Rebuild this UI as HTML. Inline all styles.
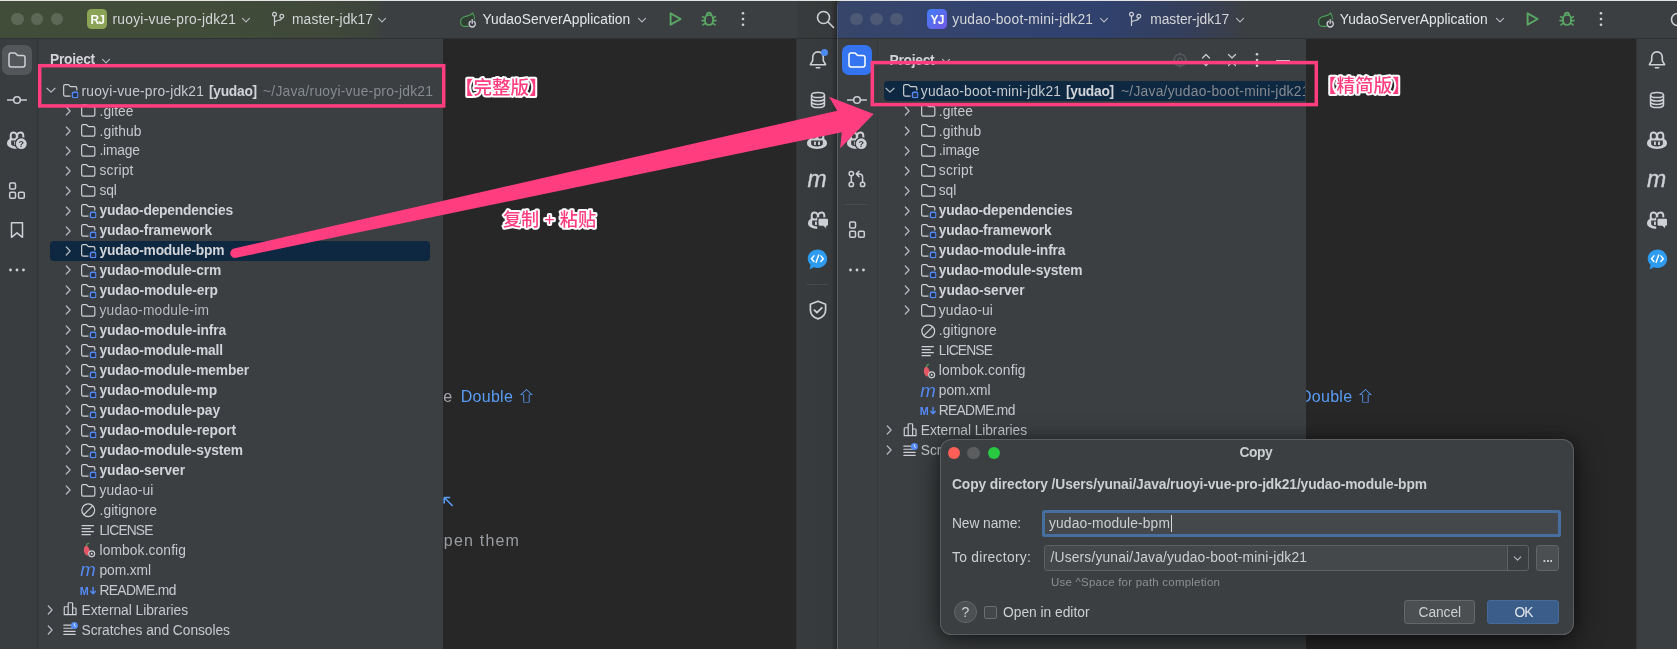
<!DOCTYPE html>
<html lang="zh"><head><meta charset="utf-8"><title>Copy module</title>
<style>
html,body{margin:0;padding:0;background:#272727;}
body{width:1677px;height:649px;position:relative;overflow:hidden;font-family:"Liberation Sans","Noto Sans CJK SC",sans-serif;}
.abs{position:absolute}
.t{position:absolute;white-space:pre;line-height:20px;height:20px}
.i{position:absolute;overflow:visible}
.win{position:absolute;top:0;height:649px;overflow:hidden}
.ann{position:absolute;white-space:pre;font-family:"Liberation Sans","Noto Sans CJK SC",sans-serif;font-weight:700;color:#ff3d7f;
 -webkit-text-stroke:3.2px #fff;paint-order:stroke fill;line-height:24px}
</style></head><body><div id="root" style="position:absolute;left:0;top:0;width:1677px;height:649px;will-change:transform">
<svg width="0" height="0" style="position:absolute">
<defs>
<symbol id="folder" viewBox="0 0 16 16"><path d="M1.6 4.2c0-.9.7-1.6 1.6-1.6h2.7c.4 0 .8.2 1 .5l.9 1.1c.2.2.4.3.7.3h4.3c.9 0 1.6.7 1.6 1.6v6c0 .9-.7 1.6-1.6 1.6H3.2c-.9 0-1.6-.7-1.6-1.6z" fill="none" stroke="#ced0d6" stroke-width="1.15"/></symbol>
<symbol id="module" viewBox="0 0 16 16"><path d="M8.2 13.7H3.2c-.9 0-1.6-.7-1.6-1.6V4.2c0-.9.7-1.6 1.6-1.6h2.7c.4 0 .8.2 1 .5l.9 1.1c.2.2.4.3.7.3h4.3c.9 0 1.6.7 1.6 1.6v2.2" fill="none" stroke="#ced0d6" stroke-width="1.15"/><rect x="10.1" y="9.9" width="5.3" height="5.3" rx="1.5" fill="#25324d" stroke="#548af7" stroke-width="1.3"/></symbol>
<symbol id="chr" viewBox="0 0 16 16"><path d="M6.300 4 10.100 8 6.300 12" fill="none" stroke="#b4b8bf" stroke-width="1.250" stroke-linecap="round" stroke-linejoin="round"/></symbol>
<symbol id="chd" viewBox="0 0 16 16"><path d="M4 6.300 8 10.100 12 6.300" fill="none" stroke="#b4b8bf" stroke-width="1.250" stroke-linecap="round" stroke-linejoin="round"/></symbol>
<symbol id="chds" viewBox="0 0 16 16"><path d="M4.5 6.3 8 9.8l3.5-3.5" fill="none" stroke="#b4b8bf" stroke-width="1.2" stroke-linecap="round" stroke-linejoin="round"/></symbol>
<symbol id="ignore" viewBox="0 0 16 16"><circle cx="8" cy="8" r="6.2" fill="none" stroke="#ced0d6" stroke-width="1.15"/><path d="M3.8 12.2 12.2 3.8" stroke="#ced0d6" stroke-width="1.15"/></symbol>
<symbol id="textf" viewBox="0 0 16 16"><path d="M2 3.600h11M2 6.500h8M2 9.400h11M2 12.300h8" stroke="#ced0d6" stroke-width="1.15" stroke-linecap="round"/></symbol>
<symbol id="lombok" viewBox="0 0 16 16"><path d="M6.2 3.2c-2 1-3 3.4-2.3 6 .5 2 1.8 3.5 3.4 4.2.3-1.300 1-2.500 2.300-3.200C9.600 7.500 8.500 4.800 6.200 3.200z" fill="#e55765"/><path d="M6.300 3.400c.2-1.200 1-1.900 2-2" fill="none" stroke="#57965c" stroke-width="1.3" stroke-linecap="round"/><circle cx="11.300" cy="11.500" r="2.900" fill="#3c3f41" stroke="#ced0d6" stroke-width="1.1"/><circle cx="11.300" cy="11.500" r="1" fill="#ced0d6"/></symbol>
<symbol id="mvn" viewBox="0 0 16 16"><text x="0.300" y="13.200" font-family="Liberation Sans,sans-serif" font-style="italic" font-size="18" fill="#548af7">m</text></symbol>
<symbol id="md" viewBox="0 0 16 16"><text x="-.3" y="12.200" font-family="Liberation Sans,sans-serif" font-weight="700" font-size="10.500" fill="#548af7">M</text><path d="M12.700 5.200v6M10.600 9.100l2.100 2.200 2.100-2.200" fill="none" stroke="#548af7" stroke-width="1.4" stroke-linecap="round" stroke-linejoin="round"/></symbol>
<symbol id="libs" viewBox="0 0 16 16"><path d="M2.200 13.300V6.300c0-.4.300-.7.700-.7H6v7.700zM6 13.300V2.400c0-.4.300-.7.700-.7h2.900c.4 0 .7.300.7.700v10.900zM10.300 13.300V6.800h2.600c.4 0 .7.300.7.700v5.800z" fill="none" stroke="#ced0d6" stroke-width="1.150" stroke-linejoin="round"/></symbol>
<symbol id="scratch" viewBox="0 0 16 16"><path d="M1.800 4h6.500M1.800 7h8.500M1.800 10h11M1.800 13h11" stroke="#ced0d6" stroke-width="1.15" stroke-linecap="round"/><circle cx="12" cy="4.300" r="3.400" fill="#548af7"/><path d="M12 2.600v1.900l1.200.8" fill="none" stroke="#dfe6ff" stroke-width=".9" stroke-linecap="round"/></symbol>
</defs></svg>
<div class="win" id="L" style="left:0;width:845px;background:#3c3f41"><div class="abs" style="left:443px;top:39px;width:354px;height:610px;background:#272727"></div><div class="abs" style="left:0;top:0;width:837px;height:38px;background:linear-gradient(90deg,#414c39 0,#414c39 200px,#3f483a 330px,#3d443c 372px,#3c3f41 384px)"></div><div class="abs" style="left:0;top:38px;width:837px;height:1px;background:#2f3133"></div><div class="abs" style="left:0;top:39px;width:37px;height:610px;background:#3a3d3f"></div><div class="abs" style="left:37px;top:39px;width:1.500px;height:610px;background:#35383a"></div><div class="abs" style="left:796px;top:39px;width:1px;height:610px;background:#333537"></div><div class="abs" style="left:797px;top:0;width:40px;height:649px;background:linear-gradient(90deg,rgba(0,0,0,.06) 0,rgba(0,0,0,.09) 85%,rgba(0,0,0,.34) 100%)"></div></div><div class="win" id="R" style="left:837px;width:840px;background:#3c3f41;border-top-left-radius:7px"><div class="abs" style="left:469px;top:39px;width:331px;height:610px;background:#272727"></div><div class="abs" style="left:0;top:0;width:840px;height:38px;background:linear-gradient(90deg,#364569 0,#32436f 160px,#30416d 270px,#353f5b 350px,#3a3f4a 395px,#3c3f41 410px)"></div><div class="abs" style="left:0;top:38px;width:840px;height:1px;background:#2f3133"></div><div class="abs" style="left:0;top:39px;width:1px;height:610px;background:#5c5f62"></div><div class="abs" style="left:0;top:0;width:1px;height:39px;background:#4a5778"></div><div class="abs" style="left:40px;top:39px;width:1px;height:610px;background:#37393c"></div><div class="abs" style="left:799px;top:39px;width:1px;height:610px;background:#333537"></div></div><div class="abs" style="left:0;top:0;width:1677px;height:1px;background:#e4e4e4"></div><div class="abs" style="left:50px;top:240.5px;width:380px;height:20px;border-radius:4px;background:#0d2840"></div><div class="abs" style="left:883.500px;top:80.700px;width:421.300px;height:19.900px;border-radius:4px 0 0 4px;background:#0d2840"></div><svg class="i" style="left:42.8px;top:82.05px;" width="16" height="16" viewBox="0 0 16 16"><use href="#chd"/></svg><svg class="i" style="left:62.3px;top:82.30px;" width="16.5" height="16.5" viewBox="0 0 16 16"><use href="#module"/></svg><span id="t0" class="t " style="left:81.5px;top:82px;font-size:13.8px;font-weight:400;color:#c6c9ce;letter-spacing:0.197px;">ruoyi-vue-pro-jdk21</span><svg class="i" style="left:60.0px;top:102.81px;" width="16" height="16" viewBox="0 0 16 16"><use href="#chr"/></svg><svg class="i" style="left:80.3px;top:102.26px;" width="16.5" height="16.5" viewBox="0 0 16 16"><use href="#folder"/></svg><span id="t1" class="t " style="left:99.5px;top:102px;font-size:13.8px;font-weight:400;color:#c6c9ce;letter-spacing:0.043px;">.gitee</span><svg class="i" style="left:60.0px;top:122.77px;" width="16" height="16" viewBox="0 0 16 16"><use href="#chr"/></svg><svg class="i" style="left:80.3px;top:122.22px;" width="16.5" height="16.5" viewBox="0 0 16 16"><use href="#folder"/></svg><span id="t2" class="t " style="left:99.5px;top:122px;font-size:13.8px;font-weight:400;color:#c6c9ce;letter-spacing:0.087px;">.github</span><svg class="i" style="left:60.0px;top:142.73px;" width="16" height="16" viewBox="0 0 16 16"><use href="#chr"/></svg><svg class="i" style="left:80.3px;top:142.18px;" width="16.5" height="16.5" viewBox="0 0 16 16"><use href="#folder"/></svg><span id="t3" class="t " style="left:99.5px;top:141px;font-size:13.8px;font-weight:400;color:#c6c9ce;letter-spacing:-0.222px;">.image</span><svg class="i" style="left:60.0px;top:162.69px;" width="16" height="16" viewBox="0 0 16 16"><use href="#chr"/></svg><svg class="i" style="left:80.3px;top:162.14px;" width="16.5" height="16.5" viewBox="0 0 16 16"><use href="#folder"/></svg><span id="t4" class="t " style="left:99.5px;top:161px;font-size:13.8px;font-weight:400;color:#c6c9ce;letter-spacing:0.188px;">script</span><svg class="i" style="left:60.0px;top:182.65px;" width="16" height="16" viewBox="0 0 16 16"><use href="#chr"/></svg><svg class="i" style="left:80.3px;top:182.10px;" width="16.5" height="16.5" viewBox="0 0 16 16"><use href="#folder"/></svg><span id="t5" class="t " style="left:99.5px;top:181px;font-size:13.8px;font-weight:400;color:#c6c9ce;letter-spacing:-0.176px;">sql</span><svg class="i" style="left:60.0px;top:202.61px;" width="16" height="16" viewBox="0 0 16 16"><use href="#chr"/></svg><svg class="i" style="left:80.3px;top:202.06px;" width="16.5" height="16.5" viewBox="0 0 16 16"><use href="#module"/></svg><span id="t6" class="t " style="left:99.5px;top:201px;font-size:13.8px;font-weight:700;color:#d2d4d9;letter-spacing:-0.214px;">yudao-dependencies</span><svg class="i" style="left:60.0px;top:222.57px;" width="16" height="16" viewBox="0 0 16 16"><use href="#chr"/></svg><svg class="i" style="left:80.3px;top:222.02px;" width="16.5" height="16.5" viewBox="0 0 16 16"><use href="#module"/></svg><span id="t7" class="t " style="left:99.5px;top:221px;font-size:13.8px;font-weight:700;color:#d2d4d9;letter-spacing:-0.167px;">yudao-framework</span><svg class="i" style="left:60.0px;top:242.53px;" width="16" height="16" viewBox="0 0 16 16"><use href="#chr"/></svg><svg class="i" style="left:80.3px;top:241.98px;" width="16.5" height="16.5" viewBox="0 0 16 16"><use href="#module"/></svg><span id="t8" class="t " style="left:99.5px;top:241px;font-size:13.8px;font-weight:700;color:#d2d4d9;letter-spacing:-0.194px;">yudao-module-bpm</span><svg class="i" style="left:60.0px;top:262.49px;" width="16" height="16" viewBox="0 0 16 16"><use href="#chr"/></svg><svg class="i" style="left:80.3px;top:261.94px;" width="16.5" height="16.5" viewBox="0 0 16 16"><use href="#module"/></svg><span id="t9" class="t " style="left:99.5px;top:261px;font-size:13.8px;font-weight:700;color:#d2d4d9;letter-spacing:-0.167px;">yudao-module-crm</span><svg class="i" style="left:60.0px;top:282.45px;" width="16" height="16" viewBox="0 0 16 16"><use href="#chr"/></svg><svg class="i" style="left:80.3px;top:281.90px;" width="16.5" height="16.5" viewBox="0 0 16 16"><use href="#module"/></svg><span id="t10" class="t " style="left:99.5px;top:281px;font-size:13.8px;font-weight:700;color:#d2d4d9;letter-spacing:-0.133px;">yudao-module-erp</span><svg class="i" style="left:60.0px;top:302.41px;" width="16" height="16" viewBox="0 0 16 16"><use href="#chr"/></svg><svg class="i" style="left:80.3px;top:301.86px;" width="16.5" height="16.5" viewBox="0 0 16 16"><use href="#folder"/></svg><span id="t11" class="t " style="left:99.5px;top:301px;font-size:13.8px;font-weight:400;color:#b7bac0;letter-spacing:0.200px;">yudao-module-im</span><svg class="i" style="left:60.0px;top:322.37px;" width="16" height="16" viewBox="0 0 16 16"><use href="#chr"/></svg><svg class="i" style="left:80.3px;top:321.82px;" width="16.5" height="16.5" viewBox="0 0 16 16"><use href="#module"/></svg><span id="t12" class="t " style="left:99.5px;top:321px;font-size:13.8px;font-weight:700;color:#d2d4d9;letter-spacing:-0.130px;">yudao-module-infra</span><svg class="i" style="left:60.0px;top:342.33px;" width="16" height="16" viewBox="0 0 16 16"><use href="#chr"/></svg><svg class="i" style="left:80.3px;top:341.78px;" width="16.5" height="16.5" viewBox="0 0 16 16"><use href="#module"/></svg><span id="t13" class="t " style="left:99.5px;top:341px;font-size:13.8px;font-weight:700;color:#d2d4d9;letter-spacing:-0.181px;">yudao-module-mall</span><svg class="i" style="left:60.0px;top:362.29px;" width="16" height="16" viewBox="0 0 16 16"><use href="#chr"/></svg><svg class="i" style="left:80.3px;top:361.74px;" width="16.5" height="16.5" viewBox="0 0 16 16"><use href="#module"/></svg><span id="t14" class="t " style="left:99.5px;top:361px;font-size:13.8px;font-weight:700;color:#d2d4d9;letter-spacing:-0.166px;">yudao-module-member</span><svg class="i" style="left:60.0px;top:382.25px;" width="16" height="16" viewBox="0 0 16 16"><use href="#chr"/></svg><svg class="i" style="left:80.3px;top:381.70px;" width="16.5" height="16.5" viewBox="0 0 16 16"><use href="#module"/></svg><span id="t15" class="t " style="left:99.5px;top:381px;font-size:13.8px;font-weight:700;color:#d2d4d9;letter-spacing:-0.143px;">yudao-module-mp</span><svg class="i" style="left:60.0px;top:402.21px;" width="16" height="16" viewBox="0 0 16 16"><use href="#chr"/></svg><svg class="i" style="left:80.3px;top:401.66px;" width="16.5" height="16.5" viewBox="0 0 16 16"><use href="#module"/></svg><span id="t16" class="t " style="left:99.5px;top:401px;font-size:13.8px;font-weight:700;color:#d2d4d9;letter-spacing:-0.139px;">yudao-module-pay</span><svg class="i" style="left:60.0px;top:422.17px;" width="16" height="16" viewBox="0 0 16 16"><use href="#chr"/></svg><svg class="i" style="left:80.3px;top:421.62px;" width="16.5" height="16.5" viewBox="0 0 16 16"><use href="#module"/></svg><span id="t17" class="t " style="left:99.5px;top:421px;font-size:13.8px;font-weight:700;color:#d2d4d9;letter-spacing:-0.122px;">yudao-module-report</span><svg class="i" style="left:60.0px;top:442.13px;" width="16" height="16" viewBox="0 0 16 16"><use href="#chr"/></svg><svg class="i" style="left:80.3px;top:441.58px;" width="16.5" height="16.5" viewBox="0 0 16 16"><use href="#module"/></svg><span id="t18" class="t " style="left:99.5px;top:441px;font-size:13.8px;font-weight:700;color:#d2d4d9;letter-spacing:-0.159px;">yudao-module-system</span><svg class="i" style="left:60.0px;top:462.09px;" width="16" height="16" viewBox="0 0 16 16"><use href="#chr"/></svg><svg class="i" style="left:80.3px;top:461.54px;" width="16.5" height="16.5" viewBox="0 0 16 16"><use href="#module"/></svg><span id="t19" class="t " style="left:99.5px;top:461px;font-size:13.8px;font-weight:700;color:#d2d4d9;letter-spacing:-0.101px;">yudao-server</span><svg class="i" style="left:60.0px;top:482.05px;" width="16" height="16" viewBox="0 0 16 16"><use href="#chr"/></svg><svg class="i" style="left:80.3px;top:481.50px;" width="16.5" height="16.5" viewBox="0 0 16 16"><use href="#folder"/></svg><span id="t20" class="t " style="left:99.5px;top:481px;font-size:13.8px;font-weight:400;color:#c6c9ce;letter-spacing:0.128px;">yudao-ui</span><svg class="i" style="left:80.3px;top:502.26px;" width="16.5" height="16.5" viewBox="0 0 16 16"><use href="#ignore"/></svg><span id="t21" class="t " style="left:99.5px;top:501px;font-size:13.8px;font-weight:400;color:#c6c9ce;letter-spacing:0.077px;">.gitignore</span><svg class="i" style="left:80.3px;top:522.22px;" width="16.5" height="16.5" viewBox="0 0 16 16"><use href="#textf"/></svg><span id="t22" class="t " style="left:99.5px;top:521px;font-size:13.8px;font-weight:400;color:#c6c9ce;letter-spacing:-0.853px;">LICENSE</span><svg class="i" style="left:80.3px;top:542.18px;" width="16.5" height="16.5" viewBox="0 0 16 16"><use href="#lombok"/></svg><span id="t23" class="t " style="left:99.5px;top:541px;font-size:13.8px;font-weight:400;color:#c6c9ce;letter-spacing:0.109px;">lombok.config</span><svg class="i" style="left:80.3px;top:562.14px;" width="16.5" height="16.5" viewBox="0 0 16 16"><use href="#mvn"/></svg><span id="t24" class="t " style="left:99.5px;top:561px;font-size:13.8px;font-weight:400;color:#c6c9ce;letter-spacing:-0.099px;">pom.xml</span><svg class="i" style="left:80.3px;top:582.10px;" width="16.5" height="16.5" viewBox="0 0 16 16"><use href="#md"/></svg><span id="t25" class="t " style="left:99.5px;top:581px;font-size:13.8px;font-weight:400;color:#c6c9ce;letter-spacing:-0.651px;">README.md</span><svg class="i" style="left:42.0px;top:601.81px;" width="16" height="16" viewBox="0 0 16 16"><use href="#chr"/></svg><svg class="i" style="left:62.3px;top:601.26px;" width="16.5" height="16.5" viewBox="0 0 16 16"><use href="#libs"/></svg><span id="t26" class="t " style="left:81.5px;top:601px;font-size:13.8px;font-weight:400;color:#c6c9ce;letter-spacing:-0.049px;">External Libraries</span><svg class="i" style="left:42.0px;top:621.77px;" width="16" height="16" viewBox="0 0 16 16"><use href="#chr"/></svg><svg class="i" style="left:62.3px;top:621.22px;" width="16.5" height="16.5" viewBox="0 0 16 16"><use href="#scratch"/></svg><span id="t27" class="t " style="left:81.5px;top:621px;font-size:13.8px;font-weight:400;color:#c6c9ce;letter-spacing:-0.049px;">Scratches and Consoles</span><span id="t28" class="t " style="left:209px;top:82px;font-size:13.8px;font-weight:700;color:#d2d4d9;letter-spacing:-0.281px;">[yudao]</span><span id="t29" class="t " style="left:263px;top:82px;font-size:13.8px;font-weight:400;color:#868a91;letter-spacing:0.246px;">~/Java/ruoyi-vue-pro-jdk21</span><span id="t30" class="t " style="left:50px;top:50px;font-size:13.8px;font-weight:700;color:#d2d4d9;letter-spacing:-0.274px;">Project</span><svg class="i" style="left:98px;top:52.50px;" width="16" height="16" viewBox="0 0 16 16"><use href="#chds"/></svg><svg class="i" style="left:882.0999999999999px;top:82.05px;" width="16" height="16" viewBox="0 0 16 16"><use href="#chd"/></svg><svg class="i" style="left:901.5999999999999px;top:82.30px;" width="16.5" height="16.5" viewBox="0 0 16 16"><use href="#module"/></svg><span id="t31" class="t " style="left:920.8px;top:82px;font-size:13.8px;font-weight:400;color:#c6c9ce;letter-spacing:0.180px;">yudao-boot-mini-jdk21</span><svg class="i" style="left:899.3px;top:102.81px;" width="16" height="16" viewBox="0 0 16 16"><use href="#chr"/></svg><svg class="i" style="left:919.5999999999999px;top:102.26px;" width="16.5" height="16.5" viewBox="0 0 16 16"><use href="#folder"/></svg><span id="t32" class="t " style="left:938.8px;top:102px;font-size:13.8px;font-weight:400;color:#c6c9ce;letter-spacing:0.061px;">.gitee</span><svg class="i" style="left:899.3px;top:122.77px;" width="16" height="16" viewBox="0 0 16 16"><use href="#chr"/></svg><svg class="i" style="left:919.5999999999999px;top:122.22px;" width="16.5" height="16.5" viewBox="0 0 16 16"><use href="#folder"/></svg><span id="t33" class="t " style="left:938.8px;top:122px;font-size:13.8px;font-weight:400;color:#c6c9ce;letter-spacing:0.148px;">.github</span><svg class="i" style="left:899.3px;top:142.73px;" width="16" height="16" viewBox="0 0 16 16"><use href="#chr"/></svg><svg class="i" style="left:919.5999999999999px;top:142.18px;" width="16.5" height="16.5" viewBox="0 0 16 16"><use href="#folder"/></svg><span id="t34" class="t " style="left:938.8px;top:141px;font-size:13.8px;font-weight:400;color:#c6c9ce;letter-spacing:-0.131px;">.image</span><svg class="i" style="left:899.3px;top:162.69px;" width="16" height="16" viewBox="0 0 16 16"><use href="#chr"/></svg><svg class="i" style="left:919.5999999999999px;top:162.14px;" width="16.5" height="16.5" viewBox="0 0 16 16"><use href="#folder"/></svg><span id="t35" class="t " style="left:938.8px;top:161px;font-size:13.8px;font-weight:400;color:#c6c9ce;letter-spacing:0.206px;">script</span><svg class="i" style="left:899.3px;top:182.65px;" width="16" height="16" viewBox="0 0 16 16"><use href="#chr"/></svg><svg class="i" style="left:919.5999999999999px;top:182.10px;" width="16.5" height="16.5" viewBox="0 0 16 16"><use href="#folder"/></svg><span id="t36" class="t " style="left:938.8px;top:181px;font-size:13.8px;font-weight:400;color:#c6c9ce;letter-spacing:-0.096px;">sql</span><svg class="i" style="left:899.3px;top:202.61px;" width="16" height="16" viewBox="0 0 16 16"><use href="#chr"/></svg><svg class="i" style="left:919.5999999999999px;top:202.06px;" width="16.5" height="16.5" viewBox="0 0 16 16"><use href="#module"/></svg><span id="t37" class="t " style="left:938.8px;top:201px;font-size:13.8px;font-weight:700;color:#d2d4d9;letter-spacing:-0.203px;">yudao-dependencies</span><svg class="i" style="left:899.3px;top:222.57px;" width="16" height="16" viewBox="0 0 16 16"><use href="#chr"/></svg><svg class="i" style="left:919.5999999999999px;top:222.02px;" width="16.5" height="16.5" viewBox="0 0 16 16"><use href="#module"/></svg><span id="t38" class="t " style="left:938.8px;top:221px;font-size:13.8px;font-weight:700;color:#d2d4d9;letter-spacing:-0.153px;">yudao-framework</span><svg class="i" style="left:899.3px;top:242.53px;" width="16" height="16" viewBox="0 0 16 16"><use href="#chr"/></svg><svg class="i" style="left:919.5999999999999px;top:241.98px;" width="16.5" height="16.5" viewBox="0 0 16 16"><use href="#module"/></svg><span id="t39" class="t " style="left:938.8px;top:241px;font-size:13.8px;font-weight:700;color:#d2d4d9;letter-spacing:-0.119px;">yudao-module-infra</span><svg class="i" style="left:899.3px;top:262.49px;" width="16" height="16" viewBox="0 0 16 16"><use href="#chr"/></svg><svg class="i" style="left:919.5999999999999px;top:261.94px;" width="16.5" height="16.5" viewBox="0 0 16 16"><use href="#module"/></svg><span id="t40" class="t " style="left:938.8px;top:261px;font-size:13.8px;font-weight:700;color:#d2d4d9;letter-spacing:-0.148px;">yudao-module-system</span><svg class="i" style="left:899.3px;top:282.45px;" width="16" height="16" viewBox="0 0 16 16"><use href="#chr"/></svg><svg class="i" style="left:919.5999999999999px;top:281.90px;" width="16.5" height="16.5" viewBox="0 0 16 16"><use href="#module"/></svg><span id="t41" class="t " style="left:938.8px;top:281px;font-size:13.8px;font-weight:700;color:#d2d4d9;letter-spacing:-0.083px;">yudao-server</span><svg class="i" style="left:899.3px;top:302.41px;" width="16" height="16" viewBox="0 0 16 16"><use href="#chr"/></svg><svg class="i" style="left:919.5999999999999px;top:301.86px;" width="16.5" height="16.5" viewBox="0 0 16 16"><use href="#folder"/></svg><span id="t42" class="t " style="left:938.8px;top:301px;font-size:13.8px;font-weight:400;color:#c6c9ce;letter-spacing:0.168px;">yudao-ui</span><svg class="i" style="left:919.5999999999999px;top:322.62px;" width="16.5" height="16.5" viewBox="0 0 16 16"><use href="#ignore"/></svg><span id="t43" class="t " style="left:938.8px;top:321px;font-size:13.8px;font-weight:400;color:#c6c9ce;letter-spacing:0.119px;">.gitignore</span><svg class="i" style="left:919.5999999999999px;top:342.58px;" width="16.5" height="16.5" viewBox="0 0 16 16"><use href="#textf"/></svg><span id="t44" class="t " style="left:938.8px;top:341px;font-size:13.8px;font-weight:400;color:#c6c9ce;letter-spacing:-0.823px;">LICENSE</span><svg class="i" style="left:919.5999999999999px;top:362.54px;" width="16.5" height="16.5" viewBox="0 0 16 16"><use href="#lombok"/></svg><span id="t45" class="t " style="left:938.8px;top:361px;font-size:13.8px;font-weight:400;color:#c6c9ce;letter-spacing:0.133px;">lombok.config</span><svg class="i" style="left:919.5999999999999px;top:382.50px;" width="16.5" height="16.5" viewBox="0 0 16 16"><use href="#mvn"/></svg><span id="t46" class="t " style="left:938.8px;top:381px;font-size:13.8px;font-weight:400;color:#c6c9ce;letter-spacing:-0.052px;">pom.xml</span><svg class="i" style="left:919.5999999999999px;top:402.46px;" width="16.5" height="16.5" viewBox="0 0 16 16"><use href="#md"/></svg><span id="t47" class="t " style="left:938.8px;top:401px;font-size:13.8px;font-weight:400;color:#c6c9ce;letter-spacing:-0.686px;">README.md</span><svg class="i" style="left:881.3px;top:422.17px;" width="16" height="16" viewBox="0 0 16 16"><use href="#chr"/></svg><svg class="i" style="left:901.5999999999999px;top:421.62px;" width="16.5" height="16.5" viewBox="0 0 16 16"><use href="#libs"/></svg><span id="t48" class="t " style="left:920.8px;top:421px;font-size:13.8px;font-weight:400;color:#c6c9ce;letter-spacing:-0.066px;">External Libraries</span><svg class="i" style="left:881.3px;top:442.13px;" width="16" height="16" viewBox="0 0 16 16"><use href="#chr"/></svg><svg class="i" style="left:901.5999999999999px;top:441.58px;" width="16.5" height="16.5" viewBox="0 0 16 16"><use href="#scratch"/></svg><span id="t49" class="t " style="left:920.8px;top:441px;font-size:13.8px;font-weight:400;color:#c6c9ce;letter-spacing:-0.063px;">Scratches and Consoles</span><span id="t50" class="t " style="left:1066px;top:82px;font-size:13.8px;font-weight:700;color:#d2d4d9;letter-spacing:-0.281px;">[yudao]</span><div class="abs" style="left:1121px;top:80px;width:183.800px;height:21px;overflow:hidden"><span id="t51" class="t " style="left:0px;top:2px;font-size:13.8px;font-weight:400;color:#868a91;letter-spacing:0.259px;">~/Java/yudao-boot-mini-jdk21</span></div><span id="t52" class="t " style="left:889.5px;top:51px;font-size:13.8px;font-weight:700;color:#d2d4d9;letter-spacing:-0.274px;">Project</span><svg class="i" style="left:937.5px;top:53.00px;" width="16" height="16" viewBox="0 0 16 16"><use href="#chds"/></svg><div class="abs" style="left:443px;top:380px;width:354px;height:200px;overflow:hidden"><span id="t53" class="t " style="left:0.3px;top:7px;font-size:16px;font-weight:400;color:#a4a7ac;letter-spacing:0.000px;">e</span><span id="t54" class="t " style="left:17.7px;top:7px;font-size:16px;font-weight:400;color:#589df6;letter-spacing:0.290px;">Double</span><span id="t55" class="t " style="left:73.8px;top:7px;font-size:13.5px;font-weight:700;color:#589df6;letter-spacing:0.000px;transform:scaleX(1.4);transform-origin:0 50%;">⇧</span><span id="t56" class="t " style="left:-9.3px;top:151px;font-size:16px;font-weight:400;color:#9a9da2;letter-spacing:1.199px;">open them</span><svg class="abs" style="left:0;top:116px" width="12" height="12" viewBox="0 0 12 12"><path d="M1.200 1.500h6M1.200 1.500v6M1.200 1.500l8.500 8.500" fill="none" stroke="#589df6" stroke-width="1.6"/></svg></div><div class="abs" style="left:1306px;top:380px;width:331px;height:40px;overflow:hidden"><span id="t57" class="t " style="left:-6px;top:7px;font-size:16px;font-weight:400;color:#589df6;letter-spacing:0.272px;">Double</span><span id="t58" class="t " style="left:50.3px;top:7px;font-size:13.5px;font-weight:700;color:#589df6;letter-spacing:0.000px;transform:scaleX(1.4);transform-origin:0 50%;">⇧</span></div><svg width="0" height="0" style="position:absolute"><defs>
<symbol id="s-folder" viewBox="0 0 20 20"><path d="M2 5.200C2 4 3 3 4.200 3h3.300c.6 0 1.100.2 1.500.7l1.100 1.300c.2.300.5.400.9.400h4.800C17 5.400 18 6.400 18 7.600v7.200c0 1.200-1 2.200-2.200 2.200H4.200C3 17 2 16 2 14.800z" fill="none" stroke="currentColor" stroke-width="1.500"/></symbol>
<symbol id="s-commit" viewBox="0 0 20 20"><path d="M0.500 10H6.500M13.500 10H19.500" stroke="currentColor" stroke-width="1.500" stroke-linecap="round"/><circle cx="10" cy="10" r="3.300" fill="none" stroke="currentColor" stroke-width="1.500"/></symbol>
<symbol id="s-struct" viewBox="0 0 20 20"><rect x="2.700" y="2" width="5.800" height="6" rx="1.300" fill="none" stroke="currentColor" stroke-width="1.500"/><rect x="2.700" y="11.200" width="5.800" height="6" rx="1.300" fill="none" stroke="currentColor" stroke-width="1.500"/><rect x="11.500" y="11.200" width="5.800" height="6" rx="1.300" fill="none" stroke="currentColor" stroke-width="1.500"/></symbol>
<symbol id="s-bookmark" viewBox="0 0 20 20"><path d="M4.500 2.800h11v14.500L10 12.800l-5.500 4.500z" fill="none" stroke="currentColor" stroke-width="1.500" stroke-linejoin="round"/></symbol>
<symbol id="s-more" viewBox="0 0 20 20"><circle cx="3.500" cy="10" r="1.400" fill="currentColor"/><circle cx="10" cy="10" r="1.400" fill="currentColor"/><circle cx="16.500" cy="10" r="1.400" fill="currentColor"/></symbol>
<symbol id="s-bell" viewBox="0 0 20 20"><path d="M10 1.900C6.700 1.900 4.700 4.300 4.700 7.400v3.300L2.400 14.700h15.200L15.300 10.700V7.400C15.300 4.300 13.300 1.900 10 1.900z" fill="none" stroke="currentColor" stroke-width="1.600" stroke-linejoin="round"/><path d="M8.300 17.800h3.400" stroke="currentColor" stroke-width="1.600" stroke-linecap="round"/></symbol>
<symbol id="s-db" viewBox="0 0 20 20"><ellipse cx="10" cy="5" rx="6.500" ry="2.600" fill="none" stroke="currentColor" stroke-width="1.500"/><path d="M3.500 5v10c0 1.400 2.900 2.600 6.500 2.600s6.500-1.200 6.500-2.600V5M3.500 8.400c0 1.400 2.900 2.600 6.500 2.600s6.500-1.200 6.500-2.600M3.500 11.800c0 1.400 2.900 2.600 6.500 2.600s6.500-1.200 6.500-2.600" fill="none" stroke="currentColor" stroke-width="1.500"/></symbol>
<symbol id="s-copilot" viewBox="0 0 20 20"><path fill-rule="evenodd" fill="currentColor" d="M10 18.900C4.200 18.900 0 16.600 0 13.500 0 11.600 1 10.100 2.700 9.100V5.400C2.700 3 4.200 1.500 6.400 1.500 8 1.500 9.300 2.200 10 3.400 10.700 2.200 12 1.500 13.600 1.500 15.800 1.500 17.300 3 17.300 5.400V9.100C19 10.100 20 11.600 20 13.500 20 16.600 15.800 18.900 10 18.900ZM4.700 5.400C4.700 4.100 5.300 3.400 6.400 3.400 7.800 3.400 8.800 4.100 8.800 5.500V7C8.800 7.800 8.200 8.400 7.400 8.400H6.100C5.300 8.400 4.700 7.800 4.700 7ZM15.300 5.400C15.300 4.100 14.700 3.400 13.600 3.400 12.200 3.400 11.200 4.100 11.200 5.500V7C11.200 7.800 11.800 8.400 12.600 8.400H13.900C14.700 8.400 15.300 7.800 15.300 7ZM4.200 10.600H15.800V14.300C15.800 15.300 13.400 16.400 10 16.400 6.600 16.400 4.200 15.300 4.200 14.300Z"/><rect x="7" y="11.600" width="1.900" height="3.500" rx=".5" fill="currentColor"/><rect x="11.100" y="11.600" width="1.900" height="3.500" rx=".5" fill="currentColor"/></symbol>
<symbol id="s-copq" viewBox="0 0 20 20"><path fill-rule="evenodd" fill="currentColor" d="M10 18.900C4.200 18.900 0 16.600 0 13.500 0 11.600 1 10.100 2.700 9.100V5.400C2.700 3 4.200 1.500 6.400 1.500 8 1.500 9.300 2.200 10 3.400 10.700 2.200 12 1.500 13.600 1.500 15.800 1.500 17.300 3 17.300 5.400V9.100C19 10.100 20 11.600 20 13.500 20 16.600 15.800 18.900 10 18.900ZM4.700 5.400C4.700 4.100 5.300 3.400 6.400 3.400 7.800 3.400 8.800 4.100 8.800 5.500V7C8.800 7.800 8.200 8.400 7.400 8.400H6.100C5.300 8.400 4.700 7.800 4.700 7ZM15.300 5.400C15.300 4.100 14.700 3.400 13.600 3.400 12.200 3.400 11.200 4.100 11.200 5.500V7C11.200 7.800 11.800 8.400 12.600 8.400H13.900C14.700 8.400 15.300 7.800 15.300 7ZM4.200 10.600H15.800V14.300C15.800 15.300 13.400 16.400 10 16.400 6.600 16.400 4.200 15.300 4.200 14.300Z"/><rect x="7" y="11.600" width="1.900" height="3.500" rx=".5" fill="currentColor"/><rect x="11.100" y="11.600" width="1.900" height="3.500" rx=".5" fill="currentColor"/><circle cx="14.300" cy="13.700" r="6.700" fill="#3b3e40"/><circle cx="14.300" cy="13.700" r="5.400" fill="currentColor"/><text x="14.300" y="16.900" text-anchor="middle" font-family="Liberation Sans,sans-serif" font-weight="700" font-size="9" fill="#3b3e40">?</text></symbol>
<symbol id="s-copchat" viewBox="0 0 20 20"><path fill-rule="evenodd" fill="currentColor" d="M10 18.900C4.200 18.900 0 16.600 0 13.500 0 11.600 1 10.100 2.700 9.100V5.400C2.700 3 4.200 1.500 6.400 1.500 8 1.500 9.300 2.200 10 3.400 10.700 2.200 12 1.500 13.600 1.500 15.800 1.500 17.300 3 17.300 5.400V9.100C19 10.100 20 11.600 20 13.500 20 16.600 15.800 18.900 10 18.900ZM4.700 5.400C4.700 4.100 5.300 3.400 6.400 3.400 7.800 3.400 8.800 4.100 8.800 5.500V7C8.800 7.800 8.200 8.400 7.400 8.400H6.100C5.300 8.400 4.700 7.800 4.700 7ZM15.300 5.400C15.300 4.100 14.700 3.400 13.600 3.400 12.200 3.400 11.200 4.100 11.200 5.500V7C11.200 7.800 11.800 8.400 12.600 8.400H13.900C14.700 8.400 15.300 7.800 15.300 7ZM4.200 10.600H15.800V14.300C15.800 15.300 13.400 16.400 10 16.400 6.600 16.400 4.200 15.300 4.200 14.300Z"/><rect x="7" y="11.600" width="1.900" height="3.500" rx=".5" fill="currentColor"/><rect x="11.100" y="11.600" width="1.900" height="3.500" rx=".5" fill="currentColor"/><path d="M9.200 7.300H21V19.500H9.200Z" fill="#3b3e40"/><path d="M11.700 8.700h7.200c.7 0 1.200.5 1.200 1.200v4.600c0 .7-.5 1.200-1.200 1.200h-.8v2.600l-2.700-2.600h-3.700c-.7 0-1.200-.5-1.200-1.200V9.900c0-.7.500-1.200 1.200-1.200z" fill="currentColor"/></symbol>
<symbol id="s-pr" viewBox="0 0 20 20"><circle cx="4.300" cy="4.600" r="2.200" fill="none" stroke="currentColor" stroke-width="1.500"/><circle cx="4.300" cy="15.400" r="2.200" fill="none" stroke="currentColor" stroke-width="1.500"/><circle cx="15.600" cy="15.400" r="2.200" fill="none" stroke="currentColor" stroke-width="1.500"/><path d="M4.300 6.800v6.400M15.600 13.200V8.300c0-1.900-1.400-3.400-3.300-3.400H9.700M12 2.200 9.300 4.900 12 7.600" fill="none" stroke="currentColor" stroke-width="1.500" stroke-linecap="round" stroke-linejoin="round"/></symbol>
<symbol id="s-shield" viewBox="0 0 20 20"><path d="M10 1.300 17.600 4.300v5.600c0 4.200-2.900 7.300-7.600 9C5.300 17.200 2.400 14.100 2.400 9.900V4.300z" fill="none" stroke="currentColor" stroke-width="1.700" stroke-linejoin="round"/><path d="M6.400 10.100 9 12.700 13.800 7.800" fill="none" stroke="currentColor" stroke-width="1.800" stroke-linecap="round" stroke-linejoin="round"/></symbol>
<symbol id="s-bubble" viewBox="0 0 20 20"><path d="M10 .6a9.400 8.800 0 1 1-3.400 17l-4 2 .8-4.300A8.800 8.800 0 0 1 .6 9.400 9.400 8.800 0 0 1 10 .6z" fill="#2d9bf0"/><path d="M6.700 6.600 4.300 9.300l2.400 2.700M13.300 6.600l2.400 2.700-2.400 2.700M11.200 5.800 8.800 12.800" fill="none" stroke="#fff" stroke-width="1.400" stroke-linecap="round" stroke-linejoin="round"/></symbol>
<symbol id="t-branch" viewBox="0 0 16 16"><circle cx="4.500" cy="3.300" r="1.900" fill="none" stroke="currentColor" stroke-width="1.200"/><circle cx="11.800" cy="5.300" r="1.900" fill="none" stroke="currentColor" stroke-width="1.200"/><path d="M4.500 5.200v9.300M4.500 11.500c0-2.800 7.300-1.200 7.300-4.300" fill="none" stroke="currentColor" stroke-width="1.200" stroke-linecap="round"/></symbol>
<symbol id="t-run" viewBox="0 0 16 16"><path d="M2.600 2.300v11.400L12.600 8z" fill="none" stroke="#5aa865" stroke-width="1.900" stroke-linejoin="round"/></symbol>
<symbol id="t-bug" viewBox="0 0 16 16"><path d="M4.100 7.200c0-2 1.600-3.200 3.900-3.200s3.900 1.200 3.900 3.200v2.900c0 2.300-1.600 3.900-3.900 3.900s-3.900-1.600-3.900-3.900z" fill="none" stroke="#5aa865" stroke-width="1.700"/><path d="M5.700 4.300C5.700 2.700 6.700 1.600 8 1.600s2.300 1.100 2.300 2.700M4.100 7.300 1.600 5.700M11.900 7.300l2.500-1.600M4.100 9.600H1M11.900 9.600H15M4.500 12.200l-2.600 1.700M11.500 12.200l2.600 1.700" fill="none" stroke="#5aa865" stroke-width="1.600" stroke-linecap="round"/></symbol>
<symbol id="t-kebab" viewBox="0 0 16 16"><circle cx="8" cy="2.300" r="1.300" fill="currentColor"/><circle cx="8" cy="8" r="1.300" fill="currentColor"/><circle cx="8" cy="13.700" r="1.300" fill="currentColor"/></symbol>
<symbol id="t-search" viewBox="0 0 20 20"><circle cx="8.500" cy="8.500" r="6" fill="none" stroke="currentColor" stroke-width="1.600"/><path d="M13 13l5.500 5.500" stroke="currentColor" stroke-width="1.600" stroke-linecap="round"/></symbol>
<symbol id="t-spring" viewBox="0 0 16 16"><path d="M12.600 1C11.200 3.400 8.300 3.700 5.300 4.500 2.200 5.300.6 7.400.6 9.800c0 2.600 1.500 4.500 3.700 4.500H9C10.500 12 14 11 14.400 8 14.700 5.500 13.900 3 12.600 1z" fill="#2f3d33" stroke="#4e9e5c" stroke-width="1.200" stroke-linejoin="round"/><circle cx="12.200" cy="11.600" r="4.600" fill="#3c3f41"/><path d="M10.400 9.400a3.100 3.100 0 1 0 3.600 0M12.200 7.700v3.600" fill="none" stroke="#ced0d6" stroke-width="1.300" stroke-linecap="round"/></symbol>
</defs></svg><div class="abs" style="left:11.3px;top:13.100000000000001px;width:12.400px;height:12.400px;border-radius:50%;background:#5d6856"></div><div class="abs" style="left:31.099999999999998px;top:13.100000000000001px;width:12.400px;height:12.400px;border-radius:50%;background:#5d6856"></div><div class="abs" style="left:51.099999999999994px;top:13.100000000000001px;width:12.400px;height:12.400px;border-radius:50%;background:#5d6856"></div><div class="abs" style="left:87px;top:9px;width:20px;height:20px;border-radius:4.500px;background:#8ba355"></div><span id="t59" class="t " style="left:90.5px;top:10px;font-size:12px;font-weight:700;color:#fff;letter-spacing:-0.896px;">RJ</span><span id="t60" class="t " style="left:112.5px;top:10px;font-size:13.8px;font-weight:400;color:#d3d5d8;letter-spacing:0.251px;">ruoyi-vue-pro-jdk21</span><svg class="i" style="left:238.00px;top:11.50px;color:#ced0d6" width="16" height="16" viewBox="0 0 16 16"><use href="#chds"/></svg><svg class="i" style="left:269.50px;top:11.00px;color:#ced0d6" width="16" height="16" viewBox="0 0 16 16"><use href="#t-branch"/></svg><span id="t61" class="t " style="left:292px;top:10px;font-size:13.8px;font-weight:400;color:#d3d5d8;letter-spacing:0.109px;">master-jdk17</span><svg class="i" style="left:374.00px;top:11.50px;color:#ced0d6" width="16" height="16" viewBox="0 0 16 16"><use href="#chds"/></svg><svg class="i" style="left:460.30px;top:11.50px;color:#ced0d6" width="16" height="16" viewBox="0 0 16 16"><use href="#t-spring"/></svg><span id="t62" class="t " style="left:482.5px;top:10px;font-size:13.8px;font-weight:400;color:#e3e5e8;letter-spacing:0.020px;">YudaoServerApplication</span><svg class="i" style="left:633.80px;top:11.50px;color:#ced0d6" width="16" height="16" viewBox="0 0 16 16"><use href="#chds"/></svg><svg class="i" style="left:667.50px;top:11.00px;color:#ced0d6" width="16" height="16" viewBox="0 0 16 16"><use href="#t-run"/></svg><svg class="i" style="left:701.00px;top:11.00px;color:#ced0d6" width="16" height="16" viewBox="0 0 16 16"><use href="#t-bug"/></svg><svg class="i" style="left:735.00px;top:11.00px;color:#ced0d6" width="16" height="16" viewBox="0 0 16 16"><use href="#t-kebab"/></svg><svg class="i" style="left:815.20px;top:9.10px;color:#ced0d6" width="20" height="20" viewBox="0 0 20 20"><use href="#t-search"/></svg><div class="abs" style="left:850.3px;top:13.100000000000001px;width:12.400px;height:12.400px;border-radius:50%;background:#4e5976"></div><div class="abs" style="left:870.4px;top:13.100000000000001px;width:12.400px;height:12.400px;border-radius:50%;background:#4e5976"></div><div class="abs" style="left:890.4px;top:13.100000000000001px;width:12.400px;height:12.400px;border-radius:50%;background:#4e5976"></div><div class="abs" style="left:926.700px;top:8.500px;width:20px;height:20px;border-radius:4.500px;background:linear-gradient(135deg,#3f7ff5,#7257e6)"></div><span id="t63" class="t " style="left:930.5px;top:10px;font-size:12px;font-weight:700;color:#fff;letter-spacing:-0.792px;">YJ</span><span id="t64" class="t " style="left:952.3px;top:10px;font-size:13.8px;font-weight:400;color:#d3d5d8;letter-spacing:0.209px;">yudao-boot-mini-jdk21</span><svg class="i" style="left:1096.00px;top:11.50px;color:#ced0d6" width="16" height="16" viewBox="0 0 16 16"><use href="#chds"/></svg><svg class="i" style="left:1127.00px;top:11.00px;color:#ced0d6" width="16" height="16" viewBox="0 0 16 16"><use href="#t-branch"/></svg><span id="t65" class="t " style="left:1150.3px;top:10px;font-size:13.8px;font-weight:400;color:#d3d5d8;letter-spacing:-0.074px;">master-jdk17</span><svg class="i" style="left:1231.80px;top:11.50px;color:#ced0d6" width="16" height="16" viewBox="0 0 16 16"><use href="#chds"/></svg><svg class="i" style="left:1318.30px;top:11.50px;color:#ced0d6" width="16" height="16" viewBox="0 0 16 16"><use href="#t-spring"/></svg><span id="t66" class="t " style="left:1339.7px;top:10px;font-size:13.8px;font-weight:400;color:#e3e5e8;letter-spacing:0.030px;">YudaoServerApplication</span><svg class="i" style="left:1491.50px;top:11.50px;color:#ced0d6" width="16" height="16" viewBox="0 0 16 16"><use href="#chds"/></svg><svg class="i" style="left:1525.30px;top:11.00px;color:#ced0d6" width="16" height="16" viewBox="0 0 16 16"><use href="#t-run"/></svg><svg class="i" style="left:1558.70px;top:11.00px;color:#ced0d6" width="16" height="16" viewBox="0 0 16 16"><use href="#t-bug"/></svg><svg class="i" style="left:1592.90px;top:11.00px;color:#ced0d6" width="16" height="16" viewBox="0 0 16 16"><use href="#t-kebab"/></svg><div class="abs" style="left:1669px;top:0;width:8px;height:38px;overflow:hidden"><svg class="i" style="left:0;top:10.500px;color:#ced0d6" width="20" height="20" viewBox="0 0 20 20"><use href="#t-search"/></svg></div><div class="abs" style="left:2px;top:44.500px;width:30px;height:30px;border-radius:7px;background:#54575a"></div><svg class="i" style="left:7.00px;top:49.70px;color:#ced0d6" width="20" height="20" viewBox="0 0 20 20"><use href="#s-folder"/></svg><svg class="i" style="left:7.00px;top:89.50px;color:#ced0d6" width="20" height="20" viewBox="0 0 20 20"><use href="#s-commit"/></svg><svg class="i" style="left:7.00px;top:129.80px;color:#ced0d6" width="20" height="20" viewBox="0 0 20 20"><use href="#s-copq"/></svg><svg class="i" style="left:7.00px;top:180.50px;color:#ced0d6" width="20" height="20" viewBox="0 0 20 20"><use href="#s-struct"/></svg><svg class="i" style="left:7.30px;top:220.00px;color:#ced0d6" width="20" height="20" viewBox="0 0 20 20"><use href="#s-bookmark"/></svg><svg class="i" style="left:7.00px;top:260.20px;color:#ced0d6" width="20" height="20" viewBox="0 0 20 20"><use href="#s-more"/></svg><svg class="i" style="left:807.50px;top:50.00px;color:#ced0d6" width="20" height="20" viewBox="0 0 20 20"><use href="#s-bell"/></svg><div class="abs" style="left:820.500px;top:49px;width:7px;height:7px;border-radius:50%;background:#4d8bf0"></div><svg class="i" style="left:807.50px;top:89.50px;color:#ced0d6" width="20" height="20" viewBox="0 0 20 20"><use href="#s-db"/></svg><svg class="i" style="left:807.30px;top:129.60px;color:#ced0d6" width="20" height="20" viewBox="0 0 20 20"><use href="#s-copilot"/></svg><span class="t" style="left:807.500px;top:167.300px;font-size:23px;font-style:italic;color:#ced0d6;line-height:24px;height:24px;-webkit-text-stroke:.35px #ced0d6">m</span><svg class="i" style="left:807.80px;top:209.80px;color:#ced0d6" width="20" height="20" viewBox="0 0 20 20"><use href="#s-copchat"/></svg><svg class="i" style="left:806.90px;top:248.60px;color:#ced0d6" width="20.8" height="20.8" viewBox="0 0 20 20"><use href="#s-bubble"/></svg><div class="abs" style="left:806px;top:284px;width:22px;height:1px;background:#45484b"></div><svg class="i" style="left:807.80px;top:300.20px;color:#ced0d6" width="20" height="20" viewBox="0 0 20 20"><use href="#s-shield"/></svg><div class="abs" style="left:842px;top:44.500px;width:30px;height:30px;border-radius:7px;background:#3574f0"></div><svg class="i" style="left:847.00px;top:49.70px;color:#fff" width="20" height="20" viewBox="0 0 20 20"><use href="#s-folder"/></svg><svg class="i" style="left:847.00px;top:89.50px;color:#ced0d6" width="20" height="20" viewBox="0 0 20 20"><use href="#s-commit"/></svg><svg class="i" style="left:847.00px;top:129.80px;color:#ced0d6" width="20" height="20" viewBox="0 0 20 20"><use href="#s-copq"/></svg><svg class="i" style="left:847.20px;top:169.40px;color:#ced0d6" width="20" height="20" viewBox="0 0 20 20"><use href="#s-pr"/></svg><div class="abs" style="left:845px;top:204px;width:23px;height:1px;background:#484b4e"></div><svg class="i" style="left:847.00px;top:220.40px;color:#ced0d6" width="20" height="20" viewBox="0 0 20 20"><use href="#s-struct"/></svg><svg class="i" style="left:847.00px;top:260.00px;color:#ced0d6" width="20" height="20" viewBox="0 0 20 20"><use href="#s-more"/></svg><svg class="i" style="left:1647.00px;top:50.00px;color:#ced0d6" width="20" height="20" viewBox="0 0 20 20"><use href="#s-bell"/></svg><svg class="i" style="left:1647.00px;top:89.50px;color:#ced0d6" width="20" height="20" viewBox="0 0 20 20"><use href="#s-db"/></svg><svg class="i" style="left:1647.10px;top:129.60px;color:#ced0d6" width="20" height="20" viewBox="0 0 20 20"><use href="#s-copilot"/></svg><span class="t" style="left:1647px;top:167.300px;font-size:23px;font-style:italic;color:#ced0d6;line-height:24px;height:24px;-webkit-text-stroke:.35px #ced0d6">m</span><svg class="i" style="left:1647.30px;top:209.80px;color:#ced0d6" width="20" height="20" viewBox="0 0 20 20"><use href="#s-copchat"/></svg><svg class="i" style="left:1646.60px;top:248.60px;color:#ced0d6" width="20.8" height="20.8" viewBox="0 0 20 20"><use href="#s-bubble"/></svg><svg class="i" style="left:1172px;top:52px" width="16" height="16" viewBox="0 0 16 16"><circle cx="8" cy="8" r="6" fill="none" stroke="#5a5d63" stroke-width="1.200"/><circle cx="8" cy="8" r="2" fill="none" stroke="#5a5d63" stroke-width="1.200"/><path d="M8 0.500v3M8 12.500v3M0.500 8h3M12.500 8h3" stroke="#5a5d63" stroke-width="1.200"/></svg><svg class="i" style="left:1198px;top:52px" width="16" height="16" viewBox="0 0 16 16"><path d="M4.500 6 8 2.500 11.500 6M4.500 10 8 13.500 11.500 10" fill="none" stroke="#ced0d6" stroke-width="1.200" stroke-linecap="round" stroke-linejoin="round"/></svg><svg class="i" style="left:1224px;top:52px" width="16" height="16" viewBox="0 0 16 16"><path d="M4.500 2.500 8 6 11.500 2.500M4.500 13.500 8 10 11.500 13.500" fill="none" stroke="#ced0d6" stroke-width="1.200" stroke-linecap="round" stroke-linejoin="round"/></svg><svg class="i" style="left:1249.40px;top:52.00px;color:#ced0d6" width="16" height="16" viewBox="0 0 16 16"><use href="#t-kebab"/></svg><div class="abs" style="left:1276px;top:59.500px;width:14px;height:1.500px;background:#ced0d6"></div><svg class="abs" style="left:0;top:0" width="1677" height="649" viewBox="0 0 1677 649">
<rect x="39.700" y="65.700" width="404" height="40.200" fill="none" stroke="#ff3d7f" stroke-width="3.500"/>
<rect x="872.300" y="62.600" width="444" height="42" fill="none" stroke="#ff3d7f" stroke-width="3.500"/>
<path d="M234.0 248.6 L837.2 110.7 L829.0 96.8 L873.7 114.0 L840.2 148.3 L841.8 132.2 L236.0 257.8 A4.7 4.7 0 0 1 234.0 248.6 Z" fill="#ff3d7f"/>
</svg><svg class="abs" style="left:445.2px;top:63.8px;overflow:visible" width="140" height="44"><text x="10" y="30" font-family="Liberation Sans, Noto Sans CJK SC, sans-serif" font-size="18.5" font-weight="500" fill="#ff3d7f" stroke="#fff" stroke-width="4" stroke-linejoin="round" paint-order="stroke fill" xml:space="preserve">【完整版】</text></svg><svg class="abs" style="left:493.0px;top:196.1px;overflow:visible" width="140" height="44"><text x="10" y="30" font-family="Liberation Sans, Noto Sans CJK SC, sans-serif" font-size="18.1" font-weight="500" fill="#ff3d7f" stroke="#fff" stroke-width="4" stroke-linejoin="round" paint-order="stroke fill" xml:space="preserve">复制 + 粘贴</text></svg><svg class="abs" style="left:1307.8px;top:62.2px;overflow:visible" width="140" height="44"><text x="10" y="30" font-family="Liberation Sans, Noto Sans CJK SC, sans-serif" font-size="18.5" font-weight="500" fill="#ff3d7f" stroke="#fff" stroke-width="4" stroke-linejoin="round" paint-order="stroke fill" xml:space="preserve">【精简版】</text></svg><div class="abs" style="left:940.5px;top:439.5px;width:632.500px;height:194.500px;border-radius:10.500px;background:#3c3f41;box-shadow:0 0 0 1px #5b5e60,0 8px 30px rgba(0,0,0,.55),0 0 14px rgba(0,0,0,.35)"></div><div class="abs" style="left:947.5px;top:446.8px;width:12.400px;height:12.400px;border-radius:50%;background:#fe5f57"></div><div class="abs" style="left:967.3px;top:446.8px;width:12.400px;height:12.400px;border-radius:50%;background:#5b5d5f"></div><div class="abs" style="left:987.5px;top:446.8px;width:12.400px;height:12.400px;border-radius:50%;background:#28c840"></div><span id="t67" class="t " style="left:1239.5px;top:443px;font-size:13.8px;font-weight:700;color:#cdcfd3;letter-spacing:-0.429px;">Copy</span><span id="t68" class="t " style="left:952px;top:475px;font-size:13.8px;font-weight:700;color:#cdcfd3;letter-spacing:-0.106px;">Copy directory /Users/yunai/Java/ruoyi-vue-pro-jdk21/yudao-module-bpm</span><span id="t69" class="t " style="left:952px;top:514px;font-size:13.8px;font-weight:400;color:#cdcfd3;letter-spacing:-0.092px;">New name:</span><div class="abs" style="left:1042px;top:510px;width:519px;height:26.500px;box-sizing:border-box;border:3px solid #466f9f;border-radius:2.500px;background:#44484a"></div><span id="t70" class="t " style="left:1049px;top:514px;font-size:13.8px;font-weight:400;color:#cdcfd3;letter-spacing:0.137px;">yudao-module-bpm</span><div class="abs" style="left:1171px;top:515px;width:1.300px;height:17px;background:#d8d8d8"></div><span id="t71" class="t " style="left:952px;top:548px;font-size:13.8px;font-weight:400;color:#cdcfd3;letter-spacing:0.307px;">To directory:</span><div class="abs" style="left:1044px;top:545px;width:484.800px;height:25.600px;box-sizing:border-box;border:1px solid #5e6162;border-radius:3px;background:linear-gradient(90deg,#44484a 0,#44484a 462.500px,#3c3f41 462.500px)"></div><div class="abs" style="left:1506.500px;top:545.500px;width:1px;height:24.600px;background:#5e6162"></div><svg class="i" style="left:1510.20px;top:550.90px;color:#ced0d6" width="15" height="15" viewBox="0 0 16 16"><use href="#chds"/></svg><span id="t72" class="t " style="left:1050.5px;top:548px;font-size:13.8px;font-weight:400;color:#cdcfd3;letter-spacing:0.169px;">/Users/yunai/Java/yudao-boot-mini-jdk21</span><div class="abs" style="left:1535.500px;top:545px;width:23.500px;height:25.600px;box-sizing:border-box;border:1px solid #626566;border-radius:3px;background:#4b4f51"></div><span id="t73" class="t " style="left:1542.8px;top:548px;font-size:12px;font-weight:700;color:#cdcfd3;letter-spacing:0.074px;">...</span><span id="t74" class="t " style="left:1051px;top:572px;font-size:11.5px;font-weight:400;color:#8c8f93;letter-spacing:0.215px;">Use ^Space for path completion</span><div class="abs" style="left:954px;top:600.500px;width:22.500px;height:22.500px;box-sizing:border-box;border:1px solid #646768;border-radius:50%;background:#4c5052"></div><span id="t75" class="t " style="left:961.5px;top:602px;font-size:14px;font-weight:400;color:#cdcfd3;letter-spacing:0.000px;">?</span><div class="abs" style="left:983.500px;top:605.500px;width:13px;height:13px;box-sizing:border-box;border:1px solid #6b6e70;border-radius:2px;background:#43474a"></div><span id="t76" class="t " style="left:1003px;top:603px;font-size:13.8px;font-weight:400;color:#cdcfd3;letter-spacing:-0.013px;">Open in editor</span><div class="abs" style="left:1403.700px;top:600px;width:71.600px;height:24.300px;box-sizing:border-box;border:1px solid #656869;border-radius:3px;background:#4b4f51"></div><span id="t77" class="t " style="left:1418.5px;top:603px;font-size:13.8px;font-weight:400;color:#cdcfd3;letter-spacing:-0.082px;">Cancel</span><div class="abs" style="left:1487.300px;top:600px;width:71.600px;height:24.300px;box-sizing:border-box;border:1px solid #466a98;border-radius:3px;background:#3a5d8a"></div><span id="t78" class="t " style="left:1514.5px;top:603px;font-size:13.8px;font-weight:400;color:#e4e6e9;letter-spacing:-0.958px;">OK</span></div></body></html>
